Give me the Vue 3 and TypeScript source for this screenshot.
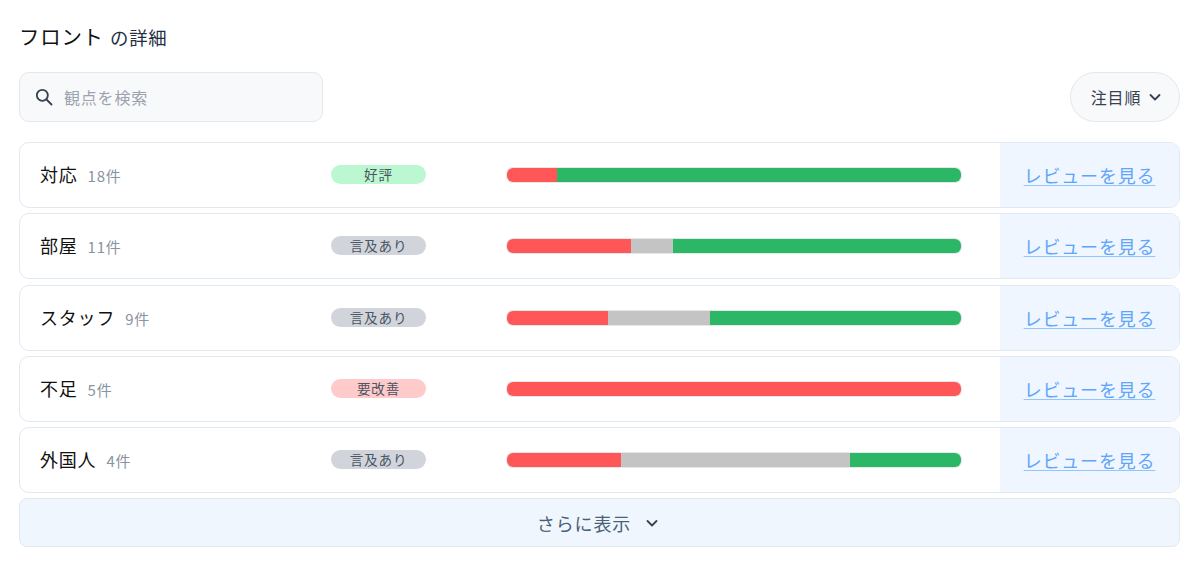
<script setup lang="ts">
interface Row {
  name: string
  count: string
  badge: string
  tone: string
  segs: [number, number, number]
}
const rows: Row[] = [
  { name: '対応', count: '18件', badge: '好評', tone: 'good', segs: [50, 0, 404] },
  { name: '部屋', count: '11件', badge: '言及あり', tone: 'neutral', segs: [124, 42, 288] },
  { name: 'スタッフ', count: '9件', badge: '言及あり', tone: 'neutral', segs: [101, 102, 251] },
  { name: '不足', count: '5件', badge: '要改善', tone: 'bad', segs: [454, 0, 0] },
  { name: '外国人', count: '4件', badge: '言及あり', tone: 'neutral', segs: [114, 229, 111] }
]
const segColors = ['#ff5757', '#c4c4c4', '#2bb766']
</script>

<template>
  <main class="page">
    <h2 class="title"><span class="title-main">フロント</span> <span class="title-sub">の詳細</span></h2>
    <div class="tools">
      <label class="search">
        <svg width="20" height="20" viewBox="0 0 24 24" fill="none" stroke="#374151" stroke-width="2.2" stroke-linecap="round">
          <circle cx="10" cy="10" r="6.6" />
          <path d="M15 15l6 6" />
        </svg>
        <span class="placeholder">観点を検索</span>
      </label>
      <button class="sort">
        <span>注目順</span>
        <svg width="14" height="14" viewBox="0 0 14 14" fill="none" stroke="#374151" stroke-width="1.8" stroke-linecap="round" stroke-linejoin="round">
          <path d="M2.5 5l4.5 4.5L11.5 5" />
        </svg>
      </button>
    </div>
    <ul class="list">
      <li v-for="row in rows" :key="row.name" class="row">
        <div class="label">
          <span class="name">{{ row.name }}</span>
          <span class="count">{{ row.count }}</span>
        </div>
        <span class="badge" :class="row.tone">{{ row.badge }}</span>
        <div class="bar">
          <i
            v-for="(w, i) in row.segs"
            :key="i"
            class="seg"
            :style="{ width: w + 'px', background: segColors[i] }"
          ></i>
        </div>
        <div class="link-cell"><a class="link">レビューを見る</a></div>
      </li>
    </ul>
    <button class="more">
      <span>さらに表示</span>
      <svg width="16" height="16" viewBox="0 0 16 16" fill="none" stroke="#374151" stroke-width="1.8" stroke-linecap="round" stroke-linejoin="round">
        <path d="M3.5 6l4.5 4.5L12.5 6" />
      </svg>
    </button>
  </main>
</template>

<style>
html, body { margin: 0; background: #fff; }
</style>

<style scoped>
.page {
  box-sizing: border-box;
  width: 1200px;
  height: 571px;
  padding: 21px 20px 0 19px;
  font-family: "Noto Sans CJK JP", "Noto Sans", sans-serif;
  letter-spacing: 0.05em;
  color: #111827;
}
.title {
  margin: 0 0 23px;
  font-weight: 400;
  line-height: 28px;
  height: 28px;
}
.title-main { font-size: 20.4px; color: #111; }
.title-sub { font-size: 18.4px; color: #1f2f45; }
.tools {
  display: flex;
  justify-content: space-between;
  align-items: center;
  margin-bottom: 20px;
}
.search {
  box-sizing: border-box;
  width: 304px;
  height: 50px;
  display: flex;
  align-items: center;
  gap: 10px;
  padding-left: 14px;
  background: #f8f9fb;
  border: 1px solid #e5e7eb;
  border-radius: 10px;
}
.placeholder { font-size: 16px; color: #9ca3af; }
.sort {
  box-sizing: border-box;
  width: 110px;
  height: 50px;
  display: flex;
  align-items: center;
  justify-content: center;
  gap: 7px;
  background: #f8f9fb;
  border: 1px solid #e5e7eb;
  border-radius: 25px;
  font: inherit;
  font-size: 16px;
  letter-spacing: 0.05em;
  color: #374151;
  padding: 0 0 0 3px;
}
.list {
  list-style: none;
  margin: 0;
  padding: 0;
  display: flex;
  flex-direction: column;
  gap: 5.3px;
}
.row {
  box-sizing: border-box;
  height: 66px;
  display: flex;
  align-items: center;
  border: 1px solid #e2e8f0;
  border-radius: 10px;
  overflow: hidden;
}
.label {
  width: 311px;
  padding-left: 20px;
  box-sizing: border-box;
  display: flex;
  align-items: baseline;
  gap: 10px;
  margin-top: -2px;
}
.name { font-size: 18px; color: #111; }
.count { font-size: 15px; color: #8a93a0; }
.badge {
  width: 95px;
  height: 19px;
  margin-top: -1px;
  border-radius: 10px;
  text-align: center;
  font-size: 13.6px;
  line-height: 19px;
  color: #4b5563;
}
.good { background: #bbf7d0; }
.neutral { background: #d1d5db; }
.bad { background: #fecaca; }
.bar {
  margin-left: 81px;
  margin-top: 0;
  width: 454px;
  height: 14px;
  display: flex;
  border-radius: 6px;
  overflow: hidden;
  box-shadow: 0 0 0 1px #e5e7eb;
}
.seg { display: block; height: 100%; }
.link-cell {
  margin-left: 39px;
  flex: 1;
  align-self: stretch;
  background: #eff6ff;
  display: flex;
  align-items: center;
  justify-content: center;
}
.link {
  font-size: 18px;
  color: #60a5fa;
  text-decoration: underline;
  text-decoration-color: #93c5fd;
  text-underline-offset: 2px;
  margin-top: 0;
}
.more {
  box-sizing: border-box;
  width: 100%;
  height: 49px;
  margin-top: 5px;
  display: flex;
  align-items: center;
  justify-content: center;
  gap: 13px;
  background: #eff6fe;
  border: 1px solid #e2e8f0;
  border-radius: 8px;
  font: inherit;
  font-size: 18px;
  letter-spacing: 0.05em;
  color: #4b5f78;
  padding: 0 2px 0 0;
}
</style>
